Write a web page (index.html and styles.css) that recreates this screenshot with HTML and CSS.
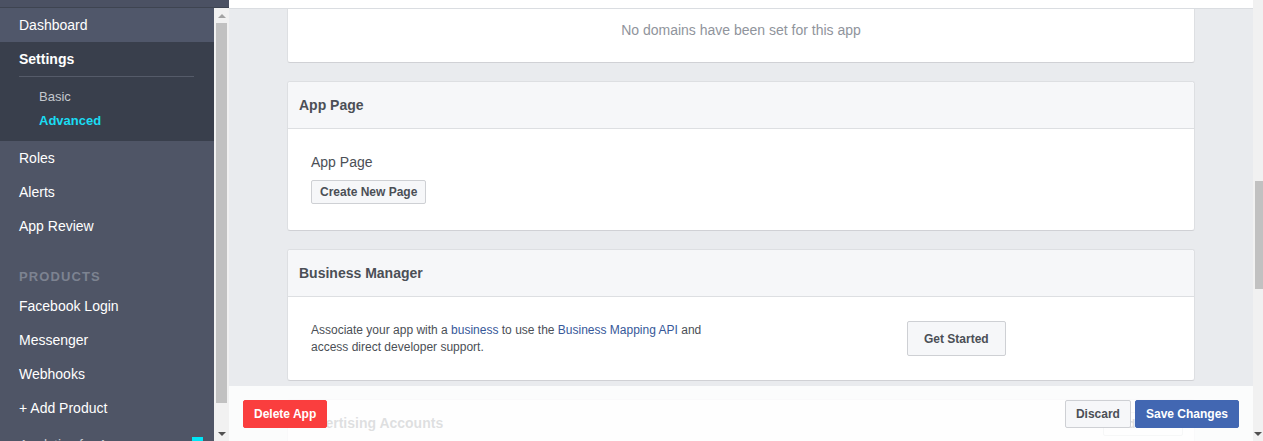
FILE: index.html
```html
<!DOCTYPE html>
<html lang="en">
<head>
<meta charset="utf-8">
<title>App Settings - Advanced</title>
<link rel="stylesheet" href="styles.css">
</head>
<body>
<aside class="sidebar">
  <div class="side-top"></div>
  <div class="side-body">
    <nav class="side-nav">
      <a class="nav-item nav-dashboard">Dashboard</a>
      <div class="nav-group">
        <div class="nav-item nav-strong">Settings</div>
        <div class="nav-sep"></div>
        <div class="sub-list">
          <a class="sub-item">Basic</a>
          <a class="sub-item sub-active">Advanced</a>
        </div>
      </div>
      <a class="nav-item">Roles</a>
      <a class="nav-item">Alerts</a>
      <a class="nav-item">App Review</a>
      <div class="nav-heading">PRODUCTS</div>
      <a class="nav-item">Facebook Login</a>
      <a class="nav-item">Messenger</a>
      <a class="nav-item">Webhooks</a>
      <a class="nav-item">+ Add Product</a>
      <a class="nav-item nav-extra"><span>Analytics for Apps</span><span class="new-badge"></span></a>
    </nav>
    <div class="side-scroll">
      <div class="arrow-box"><span class="tri-up"></span></div>
      <div class="side-thumb"></div>
      <div class="scroll-spacer"></div>
      <div class="arrow-box"><span class="tri-down"></span></div>
    </div>
  </div>
</aside>

<main class="main">
  <div class="main-top"></div>
  <div class="content">
    <section class="card card-clipped">
      <div class="empty-note">No domains have been set for this app</div>
    </section>

    <section class="card">
      <header class="card-header">App Page</header>
      <div class="card-body app-page-body">
        <div class="field-label">App Page</div>
        <button class="btn btn-small">Create New Page</button>
      </div>
    </section>

    <section class="card">
      <header class="card-header">Business Manager</header>
      <div class="card-body biz-body">
        <p class="biz-text">Associate your app with a <a class="link">business</a> to use the <a class="link">Business Mapping API</a> and access direct developer support.</p>
        <button class="btn btn-large">Get Started</button>
      </div>
    </section>

    <section class="card">
      <header class="card-header header-row">
        <span>Advertising Accounts</span>
        <button class="btn btn-small btn-ghost">Add Account</button>
      </header>
      <div class="card-body filler"></div>
    </section>
  </div>

  <div class="action-bar">
    <button class="btn btn-bar btn-danger">Delete App</button>
    <div class="bar-right">
      <button class="btn btn-bar">Discard</button>
      <button class="btn btn-bar btn-primary">Save Changes</button>
    </div>
  </div>
</main>

<div class="page-scroll">
  <div class="page-thumb"></div>
  <div class="scroll-spacer"></div>
  <div class="arrow-box narrow"><span class="tri-down"></span></div>
</div>
</body>
</html>
```

FILE: styles.css
```css
* { box-sizing: border-box; }

html, body {
  margin: 0;
  height: 441px;
  overflow: hidden;
}

body {
  display: flex;
  font-family: "Liberation Sans", Helvetica, Arial, sans-serif;
  background: #e9ebee;
}

/* ---------- Sidebar ---------- */
.sidebar {
  width: 229px;
  flex: none;
  display: flex;
  flex-direction: column;
  background: #4f5566;
}

.side-top {
  height: 8px;
  background: #4b5163;
  border-bottom: 1px solid #3e4451;
}

.side-body {
  flex: 1;
  display: flex;
  min-height: 0;
}

.side-nav {
  width: 214px;
  display: flex;
  flex-direction: column;
  overflow: hidden;
}

.nav-item {
  display: flex;
  align-items: center;
  height: 34px;
  flex: none;
  padding: 0 19px;
  color: #ffffff;
  font-size: 14px;
}

.nav-dashboard {
  background: #50576a;
}

.nav-strong {
  font-weight: bold;
}

.nav-group {
  background: #393f4c;
  padding-bottom: 9px;
}

.nav-sep {
  height: 1px;
  margin: 0 20px 0 19px;
  background: #555b69;
}

.sub-list {
  padding-top: 7px;
  display: flex;
  flex-direction: column;
}

.sub-item {
  height: 24px;
  display: flex;
  align-items: center;
  padding-left: 39px;
  font-size: 13px;
  color: #c4c8ce;
}

.sub-active {
  color: #1adcf3;
  font-weight: bold;
}

.nav-heading {
  flex: none;
  padding: 25px 19px 3px;
  line-height: 18px;
  font-size: 13px;
  font-weight: bold;
  letter-spacing: 1.1px;
  color: #7d8391;
}

.nav-extra {
  justify-content: space-between;
  padding-right: 11px;
  align-items: flex-start;
  padding-top: 12px;
  color: #c9ccd2;
}

.new-badge {
  width: 11px;
  height: 11px;
  margin-top: 0;
  background: #00e5f5;
}

/* Scrollbars */
.side-scroll {
  width: 15px;
  flex: none;
  display: flex;
  flex-direction: column;
  background: #f1f1f1;
}

.arrow-box {
  height: 15px;
  flex: none;
  display: flex;
  align-items: center;
  justify-content: center;
}

.arrow-box.narrow {
  justify-content: flex-end;
  padding-right: 1px;
}

.tri-up {
  width: 0;
  height: 0;
  border-left: 4px solid transparent;
  border-right: 4px solid transparent;
  border-bottom: 4px solid #a3a3a3;
}

.tri-down {
  width: 0;
  height: 0;
  border-left: 4px solid transparent;
  border-right: 4px solid transparent;
  border-top: 4px solid #505050;
}

.side-thumb {
  height: 380px;
  flex: none;
  margin: 0 2px;
  background: #c1c1c1;
}

.scroll-spacer {
  flex: 1;
}

.page-scroll {
  width: 10px;
  flex: none;
  display: flex;
  flex-direction: column;
  background: #f1f1f1;
}

.page-thumb {
  height: 108px;
  flex: none;
  margin: 181px 0 0 2px;
  background: #c1c1c1;
}

/* ---------- Main ---------- */
.main {
  flex: 1;
  position: relative;
  overflow: hidden;
  background: #e9ebee;
}

.main-top {
  height: 9px;
  background: #ffffff;
  border-bottom: 1px solid #dadde1;
}

.content {
  width: 908px;
  margin: 0 auto;
  display: flex;
  flex-direction: column;
  gap: 18px;
}

.card {
  background: #ffffff;
  border: 1px solid #dddfe2;
  border-bottom-color: #d0d1d5;
  border-radius: 3px;
}

.card-clipped {
  border-top: none;
  border-radius: 0 0 3px 3px;
}

.empty-note {
  padding: 12px 0 23px;
  line-height: 18px;
  text-align: center;
  font-size: 14px;
  color: #90949c;
}

.card-header {
  height: 47px;
  padding: 0 11px;
  display: flex;
  align-items: center;
  background: #f6f7f9;
  border-bottom: 1px solid #dddfe2;
  border-radius: 3px 3px 0 0;
  font-size: 14px;
  font-weight: bold;
  color: #4b4f56;
}

.header-row {
  justify-content: space-between;
}

.card-body {
  padding: 24px 23px;
}

.app-page-body {
  padding-bottom: 26px;
}

.field-label {
  font-size: 14px;
  line-height: 18px;
  color: #4b4f56;
  margin-bottom: 9px;
}

.biz-body {
  display: flex;
  align-items: center;
  padding-bottom: 24px;
}

.biz-text {
  margin: 0;
  width: 596px;
  padding-right: 196px;
  font-size: 12px;
  line-height: 17px;
  color: #4b4f56;
}

.link {
  color: #365899;
}

.filler {
  height: 120px;
}

/* Buttons */
.btn {
  font-family: "Liberation Sans", Helvetica, Arial, sans-serif;
  font-size: 12px;
  font-weight: bold;
  color: #4b4f56;
  background: #f6f7f9;
  border: 1px solid #ced0d4;
  border-radius: 2px;
  padding: 0 8px;
  white-space: nowrap;
}

.btn-small {
  height: 24px;
}

.btn-large {
  height: 35px;
  padding: 0 16px;
}

.btn-ghost {
  width: 80px;
  margin-top: 2px;
}

.btn-bar {
  height: 28px;
  padding: 0 10px;
}

.btn-danger {
  background: #fa3e3e;
  border-color: #fa3e3e;
  color: #ffffff;
}

.btn-primary {
  background: #4267b2;
  border-color: #4267b2;
  color: #ffffff;
}

/* Sticky action bar overlaying content */
.action-bar {
  position: absolute;
  left: 0;
  right: 0;
  top: 386px;
  height: 56px;
  padding: 14px;
  display: flex;
  justify-content: space-between;
  align-items: flex-start;
  background: rgba(255, 255, 255, 0.82);
}

.bar-right {
  display: flex;
  gap: 4px;
}
```
